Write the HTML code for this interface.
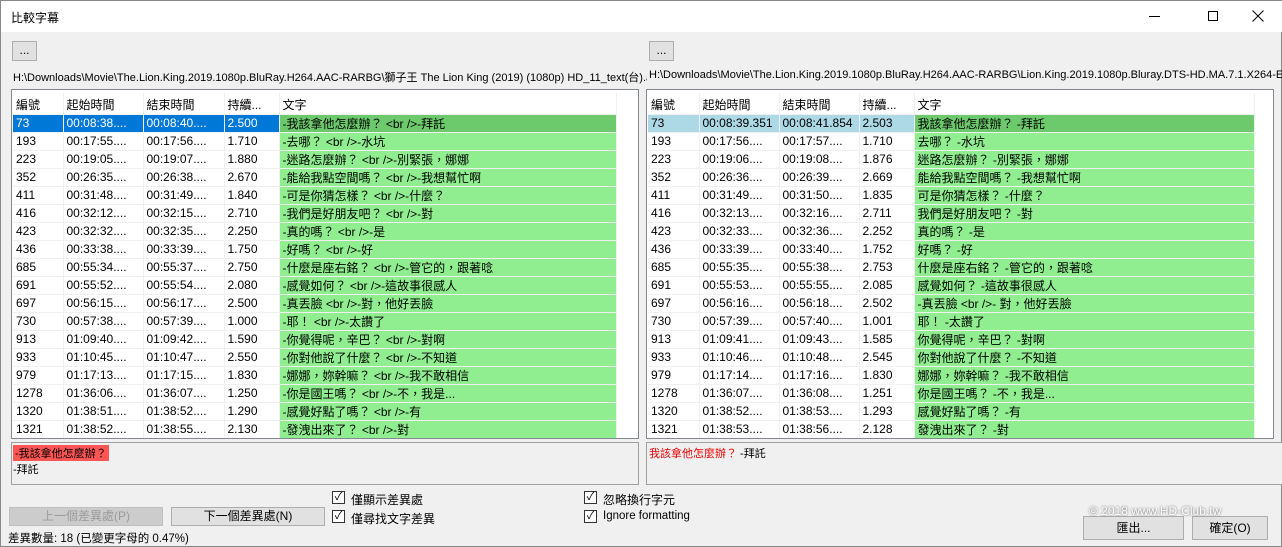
<!DOCTYPE html><html><head><meta charset="utf-8"><style>
*{margin:0;padding:0;box-sizing:border-box}
body{width:1282px;height:547px;background:#f0f0f0;font:12px "Liberation Sans","Noto Sans CJK TC",sans-serif;color:#000;position:relative;overflow:hidden;border:1px solid #888}
.a{position:absolute;white-space:nowrap}
.title{left:0;top:0;width:1282px;height:31px;background:#fff}
.btn{position:absolute;border:1px solid #adadad;background:#e1e1e1;text-align:center}
.lb{position:absolute;background:#fff;border:1px solid #828790;overflow:hidden}
table{border-collapse:collapse;position:absolute;left:1px;top:3px;table-layout:fixed}
td{height:18px;border-right:1px solid #f0f0f0;border-bottom:1px solid #f0f0f0;padding-left:3px;overflow:hidden;white-space:nowrap;font-size:12px}
tr.h td{height:21px;padding-top:2px}
td.t{background:#90ee90}
tr.s td.t{background:#6cc96c}
.L tr.s td:not(.t){background:#0078d7;color:#fff}
.R tr.s td:not(.t){background:#add8e6}
.det{position:absolute;border:1px solid #a0a0a0;background:#f0f0f0;font-size:11px}
.cb{position:absolute;width:13px;height:13px;border:1px solid #333;background:#fff;font-size:11px;line-height:11px;text-align:center}
</style></head><body>
<div class="a title"></div>
<div class="a" style="left:10px;top:8px;font-size:12px">比較字幕</div>
<div class="a" style="left:1148px;top:15px;width:11px;height:1px;background:#000"></div>
<div class="a" style="left:1207px;top:10px;width:10px;height:10px;border:1px solid #000"></div>
<svg class="a" style="left:1251px;top:9px" width="12" height="12"><path d="M0.5 0.5L11.5 11.5M11.5 0.5L0.5 11.5" stroke="#000" stroke-width="1"/></svg>
<div class="btn" style="left:11px;top:40px;width:25px;height:20px;line-height:16px">...</div>
<div class="btn" style="left:648px;top:40px;width:25px;height:20px;line-height:16px">...</div>
<div class="a" style="left:12px;top:68px;font-size:11px;width:634px;overflow:hidden">H:\Downloads\Movie\The.Lion.King.2019.1080p.BluRay.H264.AAC-RARBG\獅子王 The Lion King (2019) (1080p) HD_11_text(台).ass</div>
<div class="a" style="left:648px;top:68px;font-size:11px;width:634px;overflow:hidden">H:\Downloads\Movie\The.Lion.King.2019.1080p.BluRay.H264.AAC-RARBG\Lion.King.2019.1080p.Bluray.DTS-HD.MA.7.1.X264-EVO</div>

<div class="lb L" style="left:10px;top:88px;width:628px;height:350px"><table id="tl" style="width:603px"><col style="width:50px"><col style="width:80px"><col style="width:81px"><col style="width:55px"><col style="width:337px"></table></div>
<div class="lb R" style="left:645px;top:88px;width:628px;height:350px"><table id="tr" style="width:606px"><col style="width:51px"><col style="width:80px"><col style="width:80px"><col style="width:55px"><col style="width:340px"></table></div>

<div class="det" style="left:10px;top:441px;width:628px;height:43px"><div class="a" style="left:1px;top:2px;background:#f55;padding:0 2px">-我該拿他怎麼辦？</div><div class="a" style="left:1px;top:18px">-拜託</div></div>
<div class="det" style="left:645px;top:441px;width:640px;height:43px"><div class="a" style="left:2px;top:2px"><span style="color:#e00">我該拿他怎麼辦？</span> -拜託</div></div>

<div class="btn" style="left:8px;top:506px;width:154px;height:19px;line-height:17px;color:#9a9a9a;background:#ccc;border-color:#bfbfbf">上一個差異處(P)</div>
<div class="btn" style="left:170px;top:506px;width:154px;height:19px;line-height:17px">下一個差異處(N)</div>
<div class="cb" style="left:331px;top:490px">✓</div><div class="a" style="left:350px;top:490px">僅顯示差異處</div>
<div class="cb" style="left:331px;top:509px">✓</div><div class="a" style="left:350px;top:509px">僅尋找文字差異</div>
<div class="cb" style="left:583px;top:490px">✓</div><div class="a" style="left:602px;top:490px">忽略換行字元</div>
<div class="cb" style="left:583px;top:509px">✓</div><div class="a" style="left:602px;top:509px;font-size:11.5px">Ignore formatting</div>
<div class="btn" style="left:1082px;top:515px;width:101px;height:24px;line-height:22px">匯出...</div>
<div class="btn" style="left:1191px;top:515px;width:76px;height:24px;line-height:22px">確定(O)</div>
<div class="a" style="left:1088px;top:503px;color:#fff;font-size:12px;text-shadow:0 0 2px #555">© 2018 www.HD-Club.tw</div>
<div class="a" style="left:7px;top:529px;font-size:11.5px">差異數量: 18 (已變更字母的 0.47%)</div>
<script>
var L=[["73","00:08:38....","00:08:40....","2.500","-我該拿他怎麼辦？ &lt;br /&gt;-拜託"],["193","00:17:55....","00:17:56....","1.710","-去哪？ &lt;br /&gt;-水坑"],["223","00:19:05....","00:19:07....","1.880","-迷路怎麼辦？ &lt;br /&gt;-別緊張，娜娜"],["352","00:26:35....","00:26:38....","2.670","-能給我點空間嗎？ &lt;br /&gt;-我想幫忙啊"],["411","00:31:48....","00:31:49....","1.840","-可是你猜怎樣？ &lt;br /&gt;-什麼？"],["416","00:32:12....","00:32:15....","2.710","-我們是好朋友吧？ &lt;br /&gt;-對"],["423","00:32:32....","00:32:35....","2.250","-真的嗎？ &lt;br /&gt;-是"],["436","00:33:38....","00:33:39....","1.750","-好嗎？ &lt;br /&gt;-好"],["685","00:55:34....","00:55:37....","2.750","-什麼是座右銘？ &lt;br /&gt;-管它的，跟著唸"],["691","00:55:52....","00:55:54....","2.080","-感覺如何？ &lt;br /&gt;-這故事很感人"],["697","00:56:15....","00:56:17....","2.500","-真丟臉 &lt;br /&gt;-對，他好丟臉"],["730","00:57:38....","00:57:39....","1.000","-耶！ &lt;br /&gt;-太讚了"],["913","01:09:40....","01:09:42....","1.590","-你覺得呢，辛巴？ &lt;br /&gt;-對啊"],["933","01:10:45....","01:10:47....","2.550","-你對他說了什麼？ &lt;br /&gt;-不知道"],["979","01:17:13....","01:17:15....","1.830","-娜娜，妳幹嘛？ &lt;br /&gt;-我不敢相信"],["1278","01:36:06....","01:36:07....","1.250","-你是國王嗎？ &lt;br /&gt;-不，我是..."],["1320","01:38:51....","01:38:52....","1.290","-感覺好點了嗎？ &lt;br /&gt;-有"],["1321","01:38:52....","01:38:55....","2.130","-發洩出來了？ &lt;br /&gt;-對"]];
var R=[["73","00:08:39.351","00:08:41.854","2.503","我該拿他怎麼辦？ -拜託"],["193","00:17:56....","00:17:57....","1.710","去哪？ -水坑"],["223","00:19:06....","00:19:08....","1.876","迷路怎麼辦？ -別緊張，娜娜"],["352","00:26:36....","00:26:39....","2.669","能給我點空間嗎？ -我想幫忙啊"],["411","00:31:49....","00:31:50....","1.835","可是你猜怎樣？ -什麼？"],["416","00:32:13....","00:32:16....","2.711","我們是好朋友吧？ -對"],["423","00:32:33....","00:32:36....","2.252","真的嗎？ -是"],["436","00:33:39....","00:33:40....","1.752","好嗎？ -好"],["685","00:55:35....","00:55:38....","2.753","什麼是座右銘？ -管它的，跟著唸"],["691","00:55:53....","00:55:55....","2.085","感覺如何？ -這故事很感人"],["697","00:56:16....","00:56:18....","2.502","-真丟臉 &lt;br /&gt;- 對，他好丟臉"],["730","00:57:39....","00:57:40....","1.001","耶！ -太讚了"],["913","01:09:41....","01:09:43....","1.585","你覺得呢，辛巴？ -對啊"],["933","01:10:46....","01:10:48....","2.545","你對他說了什麼？ -不知道"],["979","01:17:14....","01:17:16....","1.830","娜娜，妳幹嘛？ -我不敢相信"],["1278","01:36:07....","01:36:08....","1.251","你是國王嗎？ -不，我是..."],["1320","01:38:52....","01:38:53....","1.293","感覺好點了嗎？ -有"],["1321","01:38:53....","01:38:56....","2.128","發洩出來了？ -對"]];
function f(id,d){var h='<tr class="h"><td>編號</td><td>起始時間</td><td>結束時間</td><td>持續...</td><td>文字</td></tr>';d.forEach(function(r,i){h+='<tr'+(i?'':' class="s"')+'>';r.forEach(function(c,j){h+='<td'+(j==4?' class="t"':'')+'>'+c+'</td>'});h+='</tr>'});document.getElementById(id).insertAdjacentHTML('beforeend',h)}
f('tl',L);f('tr',R);
</script>
</body></html>
